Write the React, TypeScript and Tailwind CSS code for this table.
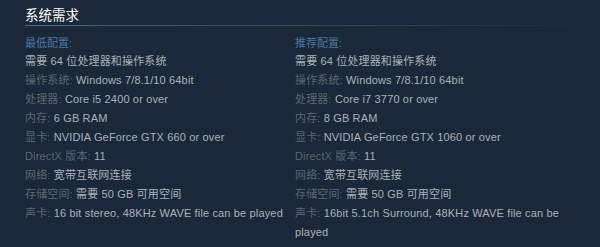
import React from "react";

interface Spec {
  label: string;
  value: string;
}

interface Column {
  title: string;
  specs: Spec[];
}

const columns: Column[] = [
  {
    title: "最低配置:",
    specs: [
      { label: "操作系统:", value: "Windows 7/8.1/10 64bit" },
      { label: "处理器:", value: "Core i5 2400 or over" },
      { label: "内存:", value: "6 GB RAM" },
      { label: "显卡:", value: "NVIDIA GeForce GTX 660 or over" },
      { label: "DirectX 版本:", value: "11" },
      { label: "网络:", value: "宽带互联网连接" },
      { label: "存储空间:", value: "需要 50 GB 可用空间" },
      { label: "声卡:", value: "16 bit stereo, 48KHz WAVE file can be played" },
    ],
  },
  {
    title: "推荐配置:",
    specs: [
      { label: "操作系统:", value: "Windows 7/8.1/10 64bit" },
      { label: "处理器:", value: "Core i7 3770 or over" },
      { label: "内存:", value: "8 GB RAM" },
      { label: "显卡:", value: "NVIDIA GeForce GTX 1060 or over" },
      { label: "DirectX 版本:", value: "11" },
      { label: "网络:", value: "宽带互联网连接" },
      { label: "存储空间:", value: "需要 50 GB 可用空间" },
      { label: "声卡:", value: "16bit 5.1ch Surround, 48KHz WAVE file can be played" },
    ],
  },
];

const App = () => {
  return (
    <div
      className="w-[600px] h-[247px] bg-[#1b2838] pt-[6px] pl-[25px] pr-[30px] overflow-hidden"
      style={{ fontFamily: '"Liberation Sans", "Noto Sans CJK SC", sans-serif' }}
    >
      {/* Header */}
      <h2 className="text-[13.5px] leading-[19px] text-white">系统需求</h2>
      <div className="h-px w-[575px] bg-gradient-to-r from-[#3f6f91] via-[#2d4b66] to-transparent" />

      {/* Requirements */}
      <div className="grid grid-cols-[270px_1fr] mt-[9px]">
        {columns.map((col) => (
          <div key={col.title}>
            <p className="text-[11px] leading-[17px] text-[#4b77a0]">{col.title}</p>
            <ul className="text-[11px] leading-[19px] tracking-[0.15px] text-[#acb2b8]">
              <li>需要 64 位处理器和操作系统</li>
              {col.specs.map((spec) => (
                <li key={spec.label}>
                  <span className="text-[#5f666d]">{spec.label}</span> {spec.value}
                </li>
              ))}
            </ul>
          </div>
        ))}
      </div>
    </div>
  );
};

export default App;
